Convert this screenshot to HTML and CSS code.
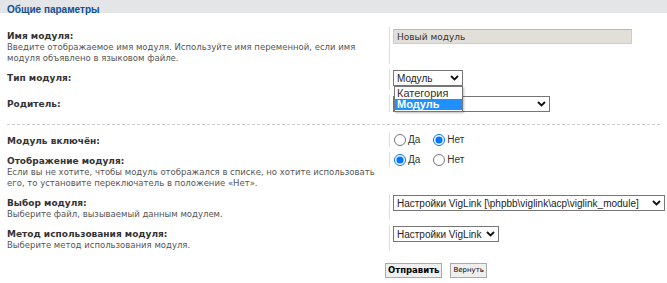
FILE: index.html
```html
<!DOCTYPE html>
<html lang="ru">
<head>
  <meta charset="UTF-8" />
  <title>Управление модулями</title>
  <link rel="stylesheet" href="styles.css">
</head>
<body>

<form class="panel">
  <div class="legend"><span>Общие параметры</span></div>

  <dl class="row">
    <dt><label>Имя модуля:</label><span class="explain">Введите отображаемое имя модуля. Используйте имя переменной, если имя модуля объявлено в языковом файле.</span></dt>
    <dd><input type="text" class="text-input" value="Новый модуль" /></dd>
  </dl>

  <dl class="row row-type">
    <dt><label>Тип модуля:</label></dt>
    <dd>
      <div class="sel-box sel-type">
        <select class="sel"><option>Модуль</option></select>
        <svg class="chev" width="9" height="6" viewBox="0 0 9 6"><path d="M1 1 L4.5 4.5 L8 1" fill="none" stroke="#111" stroke-width="1.8"/></svg>
        <ul class="drop-list">
          <li>Категория</li>
          <li class="picked">Модуль</li>
        </ul>
      </div>
    </dd>
  </dl>

  <dl class="row">
    <dt><label>Родитель:</label></dt>
    <dd>
      <div class="sel-box sel-parent">
        <select class="sel"><option></option></select>
        <svg class="chev" width="9" height="6" viewBox="0 0 9 6"><path d="M1 1 L4.5 4.5 L8 1" fill="none" stroke="#111" stroke-width="1.8"/></svg>
      </div>
    </dd>
  </dl>

  <hr class="dashed" />

  <dl class="row">
    <dt><label>Модуль включён:</label></dt>
    <dd class="radios">
      <label><input type="radio" name="enabled" /> Да</label>
      <label><input type="radio" name="enabled" checked /> Нет</label>
    </dd>
  </dl>

  <dl class="row">
    <dt><label>Отображение модуля:</label><span class="explain">Если вы не хотите, чтобы модуль отображался в списке, но хотите использовать его, то установите переключатель в положение «Нет».</span></dt>
    <dd class="radios">
      <label><input type="radio" name="display" checked /> Да</label>
      <label><input type="radio" name="display" /> Нет</label>
    </dd>
  </dl>

  <dl class="row">
    <dt><label>Выбор модуля:</label><span class="explain">Выберите файл, вызываемый данным модулем.</span></dt>
    <dd>
      <div class="sel-box sel-wide">
        <select class="sel"><option>Настройки VigLink [\phpbb\viglink\acp\viglink_module]</option></select>
        <svg class="chev" width="9" height="6" viewBox="0 0 9 6"><path d="M1 1 L4.5 4.5 L8 1" fill="none" stroke="#111" stroke-width="1.8"/></svg>
      </div>
    </dd>
  </dl>

  <dl class="row">
    <dt><label>Метод использования модуля:</label><span class="explain">Выберите метод использования модуля.</span></dt>
    <dd>
      <div class="sel-box sel-mode">
        <select class="sel"><option>Настройки VigLink</option></select>
        <svg class="chev" width="9" height="6" viewBox="0 0 9 6"><path d="M1 1 L4.5 4.5 L8 1" fill="none" stroke="#111" stroke-width="1.8"/></svg>
      </div>
    </dd>
  </dl>

  <p class="submit-buttons">
    <button type="button" class="btn btn-main">Отправить</button>
    <button type="button" class="btn btn-reset">Вернуть</button>
  </p>
</form>

</body>
</html>
```

FILE: styles.css
```css
html, body {
  margin: 0; padding: 0;
  background: #ffffff;
  color: #333333;
  font-family: Verdana, "DejaVu Sans", sans-serif;
  font-size: 10px;
}

.panel {
  margin: 0;
  padding: 0 7px 0 7px;
  background: linear-gradient(to bottom, #e4e5e7 0, #e4e5e7 13px, #ffffff 13px);
}

.legend {
  height: 27px;
}

.legend span {
  display: inline-block;
  margin-top: 4px;
  font-family: "Liberation Sans", Arial, sans-serif;
  font-size: 10px;
  font-weight: 700;
  color: #115098;
}

.row {
  display: grid;
  grid-template-columns: 382px 1fr;
  margin: 0;
  padding: 0 0 5px 0;
}

.row dt {
  margin: 0;
  line-height: 11px;
}

.row dt label {
  display: block;
  font-size: 9px;
  font-weight: 700;
  color: #333333;
  padding-top: 4px;
}

.explain {
  display: block;
  font-size: 8.5px;
  color: #555555;
}

.row dd {
  margin: 0;
  padding-left: 3px;
  border-left: 1px solid #dddddd;
  min-height: 15px;
}

.row-type dd {
  min-height: 21px;
}

.text-input {
  box-sizing: border-box;
  width: 239px;
  height: 15px;
  margin-top: 2px;
  padding: 0 3px;
  border: 1px solid #cfccc6;
  border-top-color: #bdb9b3;
  background: #e2dfd9;
  font-family: Verdana, "DejaVu Sans", sans-serif;
  font-size: 9px;
  color: #333333;
}

.sel-box {
  position: relative;
  display: inline-block;
  margin-top: 1px;
  vertical-align: top;
}

.sel {
  appearance: none;
  -webkit-appearance: none;
  box-sizing: border-box;
  width: 100%;
  height: 16px;
  margin: 0;
  padding: 0 12px 0 3px;
  border: 1px solid #767676;
  border-radius: 0;
  background: #ffffff;
  font-family: "Liberation Sans", Arial, sans-serif;
  font-size: 10px;
  color: #222222;
}

.chev {
  position: absolute;
  top: 5px; right: 4px;
  pointer-events: none;
}

.sel-type { width: 70px; }
.sel-parent { width: 157px; }
.sel-wide { width: 272px; }
.sel-mode { width: 106px; }

.drop-list {
  position: absolute;
  top: 16px; left: 1px;
  width: 67px;
  margin: 0; padding: 1px 0;
  list-style: none;
  background: #ffffff;
  border: 1px solid #767676;
  box-shadow: 1px 1px 2px #00000044;
  font-family: "Liberation Sans", Arial, sans-serif;
  font-size: 11px;
  line-height: 11px;
  z-index: 10;
}

.drop-list li {
  padding: 0 2px;
}

.drop-list li.picked {
  background: #1e90ff;
  color: #ffffff;
  font-weight: 700;
}

.dashed {
  height: 0;
  margin: 7px 0 7px 0;
  border: 0;
  border-top: 1px dashed #cccccc;
}

.radios {
  display: flex;
  gap: 12px;
  align-items: center;
  align-self: start;
  height: 14px;
  margin-top: 1px;
}

.radios label {
  display: flex;
  align-items: center;
  gap: 1px;
  font-family: "Liberation Sans", Arial, sans-serif;
  font-size: 10px;
  color: #333333;
}

.radios input {
  width: 12px;
  height: 12px;
  margin: 0 1px 0 1px;
}

.submit-buttons {
  margin: 7px 0 0 0;
  padding: 0 0 6px 378px;
  display: flex;
  gap: 8px;
}

.btn {
  height: 15px;
  padding: 0 2px;
  border: 1px solid #aaaaaa;
  background: #efefef;
  color: #000000;
  font-family: Verdana, "DejaVu Sans", sans-serif;
  line-height: 11px;
}

.btn-main {
  font-size: 8.5px;
  font-weight: 700;
}

.btn-reset {
  font-size: 7px;
}
```
